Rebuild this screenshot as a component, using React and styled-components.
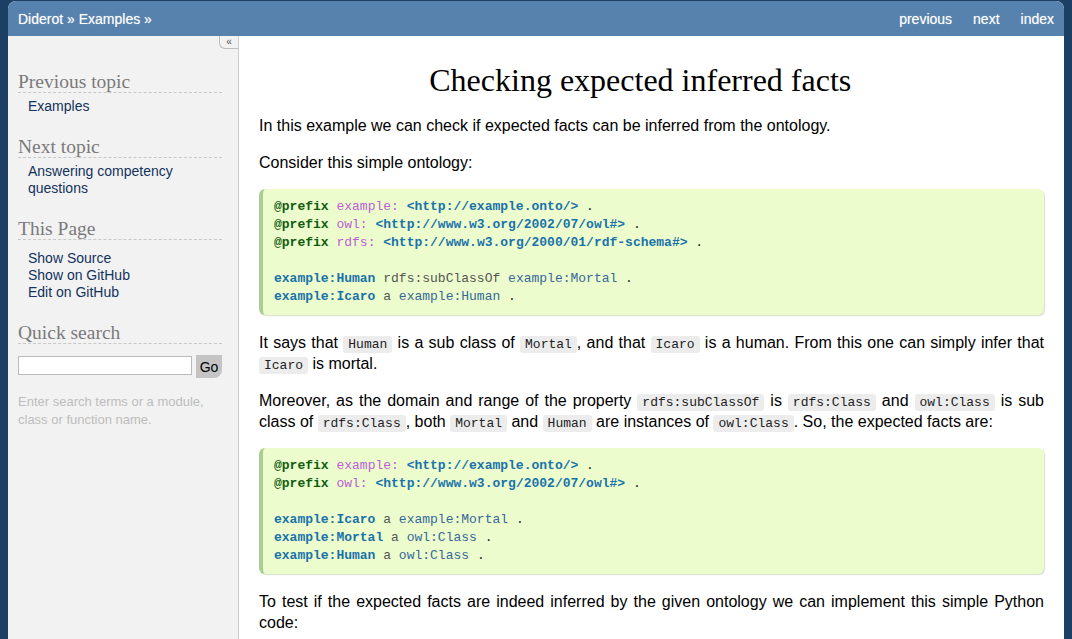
import React from "react";
import styled, { createGlobalStyle } from "styled-components";

const GlobalStyle = createGlobalStyle`
  html, body {
    margin: 0;
    padding: 0;
    background: #1c4063;
    font-family: "Liberation Sans", Arial, sans-serif;
  }
`;

const Page = styled.div`
  margin: 1px 8px 0;
  min-height: calc(100vh - 1px);
  border-radius: 8px 8px 0 0;
  overflow: hidden;
  background: #fff;
  display: flex;
  flex-direction: column;
`;

const Header = styled.header`
  height: 35px;
  flex-shrink: 0;
  background: #5682ad;
  display: flex;
  align-items: center;
  justify-content: space-between;
  padding: 0 10px;
  color: #fff;
  font-size: 14px;
  text-shadow: 0 0 1px rgba(255, 255, 255, 0.5);
`;

const NavLinks = styled.nav`
  display: flex;
  gap: 21px;
`;

const Body = styled.div`
  flex: 1;
  display: flex;
`;

const Sidebar = styled.aside`
  position: relative;
  width: 204px;
  flex-shrink: 0;
  padding: 36px 16px 0 10px;
  background: #f2f2f2;
  border-right: 1px solid #cccccc;
  display: flex;
  flex-direction: column;
  gap: 22px;
`;

const Collapse = styled.div`
  position: absolute;
  top: 0;
  right: 0;
  width: 18px;
  height: 12px;
  border-left: 1px solid #bdbdbd;
  border-bottom: 1px solid #bdbdbd;
  border-bottom-left-radius: 6px;
  font-size: 10px;
  line-height: 12px;
  text-align: center;
  color: #555;
`;

const SideHeading = styled.h3`
  margin: 0;
  font-family: "Liberation Serif", "Times New Roman", serif;
  font-weight: normal;
  font-size: 19.5px;
  line-height: 20px;
  color: #7a7a7a;
  border-bottom: 1px dashed #c8c8c8;
`;

const SideList = styled.ul`
  list-style: none;
  margin: ${(p) => (p.$loose ? "10px" : "5px")} 0 0;
  padding: 0 0 0 10px;
  font-size: 14px;
  line-height: 17px;
  color: #12335c;
`;

const SearchForm = styled.form`
  display: flex;
  align-items: flex-start;
  margin-top: 11px;
`;

const SearchInput = styled.input`
  box-sizing: border-box;
  width: 174px;
  height: 19px;
  margin: 1px 0 0;
  border: 1px solid #bbbbbb;
  background: #fff;
`;

const GoButton = styled.button`
  width: 30px;
  height: 23px;
  margin-left: 4px;
  padding: 0;
  border: none;
  border-radius: 0 0 8px 0;
  background: #c4c4c4;
  font-family: "Liberation Sans", Arial, sans-serif;
  font-size: 14px;
  color: #000;
`;

const Hint = styled.p`
  margin: 15px 0 0;
  font-size: 13px;
  line-height: 18px;
  color: #bdbdbd;
`;

const Content = styled.main`
  flex: 1;
  padding: 0 20px;
  color: #000;
  font-size: 16px;
  line-height: 21px;
`;

const Title = styled.h1`
  margin: 25px 0 15px;
  text-align: center;
  font-family: "Liberation Serif", "Times New Roman", serif;
  font-weight: normal;
  font-size: 32px;
  line-height: 38px;
`;

/* sphinx's hidden permalink still takes room after the title */
const HeaderLink = styled.span`
  visibility: hidden;
  padding-left: 8px;
`;

const Para = styled.p`
  margin: 16px 0;
  text-align: justify;
`;

const Code = styled.code`
  font-family: "Liberation Mono", "Courier New", monospace;
  font-size: 13px;
  line-height: 1;
  background: #ececec;
  color: #222;
  padding: 1px 5px;
  border-radius: 3px;
`;

const Pre = styled.pre`
  margin: 16px 0 17px;
  padding: 9px 12px 9px 11px;
  background: #ecfccc;
  border-left: 4px solid #a9cd95;
  border-radius: 6px;
  box-shadow: 1px 1px 1px rgba(90, 130, 60, 0.25);
  font-family: "Liberation Mono", "Courier New", monospace;
  font-size: 13px;
  line-height: 18px;
  color: #333;
`;

const tokenColors = {
  kw: "#125c12",
  ns: "#bb60d5",
  url: "#1a72aa",
  subj: "#1a72aa",
  attr: "#555",
  obj: "#36699a",
  dot: "#222",
};

const Tok = styled.span`
  color: ${(p) => tokenColors[p.$k]};
  font-weight: ${(p) => (["kw", "url", "subj"].includes(p.$k) ? "bold" : "normal")};
`;

const Prefix = ({ ns, url }) => (
  <>
    <Tok $k="kw">@prefix</Tok> <Tok $k="ns">{ns}:</Tok> <Tok $k="url">{url}</Tok>{" "}
    <Tok $k="dot">.</Tok>
    {"\n"}
  </>
);

const Triple = ({ s, p, o }) => (
  <>
    <Tok $k="subj">{s}</Tok> <Tok $k="attr">{p}</Tok> <Tok $k="obj">{o}</Tok>{" "}
    <Tok $k="dot">.</Tok>
    {"\n"}
  </>
);

export default function App() {
  return (
    <>
      <GlobalStyle />
      <Page>
        <Header>
          <span>Diderot » Examples »</span>
          <NavLinks>
            <span>previous</span>
            <span>next</span>
            <span>index</span>
          </NavLinks>
        </Header>
        <Body>
          <Sidebar>
            <Collapse>«</Collapse>
            <div>
              <SideHeading>Previous topic</SideHeading>
              <SideList>
                <li>Examples</li>
              </SideList>
            </div>
            <div>
              <SideHeading>Next topic</SideHeading>
              <SideList>
                <li>Answering competency questions</li>
              </SideList>
            </div>
            <div>
              <SideHeading>This Page</SideHeading>
              <SideList $loose>
                <li>Show Source</li>
                <li>Show on GitHub</li>
                <li>Edit on GitHub</li>
              </SideList>
            </div>
            <div>
              <SideHeading>Quick search</SideHeading>
              <SearchForm onSubmit={(e) => e.preventDefault()}>
                <SearchInput type="text" />
                <GoButton type="submit">Go</GoButton>
              </SearchForm>
              <Hint>Enter search terms or a module, class or function name.</Hint>
            </div>
          </Sidebar>
          <Content>
            <Title>
              Checking expected inferred facts<HeaderLink>¶</HeaderLink>
            </Title>
            <Para>In this example we can check if expected facts can be inferred from the ontology.</Para>
            <Para>Consider this simple ontology:</Para>
            <Pre>
              <Prefix ns="example" url="<http://example.onto/>" />
              <Prefix ns="owl" url="<http://www.w3.org/2002/07/owl#>" />
              <Prefix ns="rdfs" url="<http://www.w3.org/2000/01/rdf-schema#>" />
              {"\n"}
              <Triple s="example:Human" p="rdfs:subClassOf" o="example:Mortal" />
              <Triple s="example:Icaro" p="a" o="example:Human" />
            </Pre>
            <Para>
              It says that <Code>Human</Code> is a sub class of <Code>Mortal</Code>, and that{" "}
              <Code>Icaro</Code> is a human. From this one can simply infer that <Code>Icaro</Code> is
              mortal.
            </Para>
            <Para>
              Moreover, as the domain and range of the property <Code>rdfs:subClassOf</Code> is{" "}
              <Code>rdfs:Class</Code> and <Code>owl:Class</Code> is sub class of{" "}
              <Code>rdfs:Class</Code>, both <Code>Mortal</Code> and <Code>Human</Code> are instances
              of <Code>owl:Class</Code>. So, the expected facts are:
            </Para>
            <Pre>
              <Prefix ns="example" url="<http://example.onto/>" />
              <Prefix ns="owl" url="<http://www.w3.org/2002/07/owl#>" />
              {"\n"}
              <Triple s="example:Icaro" p="a" o="example:Mortal" />
              <Triple s="example:Mortal" p="a" o="owl:Class" />
              <Triple s="example:Human" p="a" o="owl:Class" />
            </Pre>
            <Para>
              To test if the expected facts are indeed inferred by the given ontology we can
              implement this simple Python code:
            </Para>
          </Content>
        </Body>
      </Page>
    </>
  );
}
